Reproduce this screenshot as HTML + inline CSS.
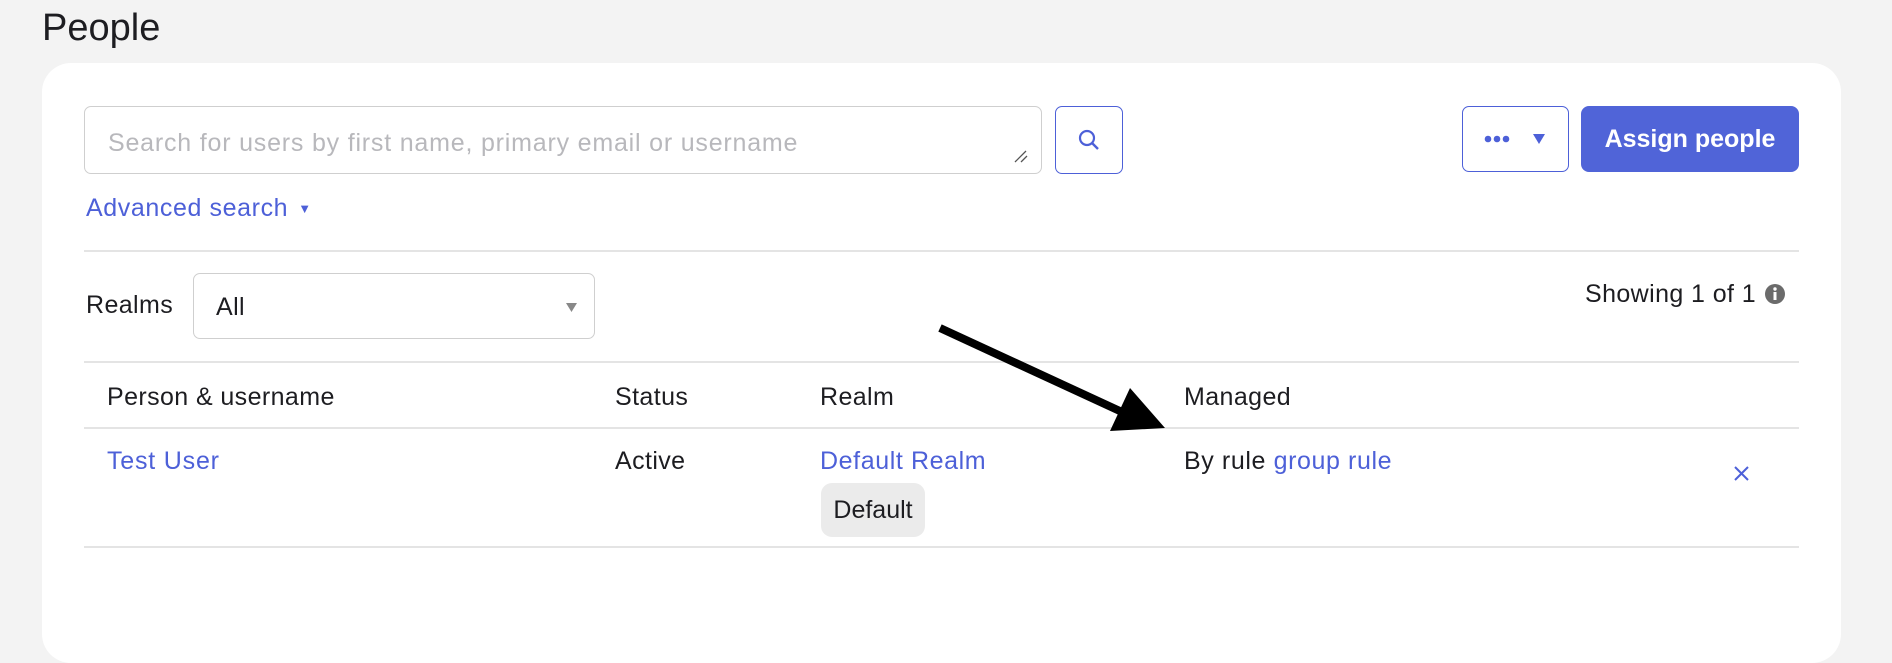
<!DOCTYPE html>
<html><head><meta charset="utf-8"><style>
*{box-sizing:border-box;margin:0;padding:0}
body{width:1892px;height:596px;background:#f3f3f3;font-family:"Liberation Sans",sans-serif;color:#1d1d21;position:relative;overflow:hidden}
.abs{position:absolute}
h1{position:absolute;left:42px;top:7px;font-size:38px;font-weight:normal;color:#1d1d21}
.card{position:absolute;left:42px;top:63px;width:1799px;height:600px;background:#fff;border-radius:29px}
.t{position:absolute;font-size:25px;line-height:28px;white-space:nowrap;letter-spacing:0.4px}
.link{color:#4d60d8}
.hr{position:absolute;left:84px;width:1715px;height:2px;background:#e4e4e4}
</style></head><body>
<h1>People</h1>
<div class="card"></div>
<div class="abs" style="left:84px;top:106px;width:958px;height:68px;border:1px solid #cfcfcf;border-radius:7px"></div>
<div class="t" style="left:108px;top:129px;color:#b8b8bc;letter-spacing:0.8px">Search for users by first name, primary email or username</div>
<svg class="abs" style="left:1012px;top:148px" width="18" height="16"><path d="M3 14L14 3M9 14L15 8" stroke="#555" stroke-width="1.3"/></svg>
<div class="abs" style="left:1055px;top:106px;width:68px;height:68px;border:1.5px solid #4d60d8;border-radius:7px"></div>
<svg class="abs" style="left:1077px;top:128px" width="24" height="24"><circle cx="10" cy="10" r="7" fill="none" stroke="#4d60d8" stroke-width="2.2"/><path d="M15 15L21 21" stroke="#4d60d8" stroke-width="2.4"/></svg>
<div class="t link" style="left:86px;top:194px;letter-spacing:0.6px">Advanced search<span style="font-size:13px;margin-left:10px;vertical-align:3px">▼</span></div>
<div class="abs" style="left:1462px;top:106px;width:107px;height:66px;border:1.5px solid #4d60d8;border-radius:7px"></div>
<svg class="abs" style="left:1484px;top:134px" width="28" height="10"><circle cx="4" cy="5" r="3.3" fill="#4d60d8"/><circle cx="13" cy="5" r="3.3" fill="#4d60d8"/><circle cx="22" cy="5" r="3.3" fill="#4d60d8"/></svg>
<svg class="abs" style="left:1533px;top:133px" width="12" height="12"><path d="M0 1H12L6 11Z" fill="#4d60d8"/></svg>
<div class="abs" style="left:1581px;top:106px;width:218px;height:66px;background:#5064d8;border-radius:8px;color:#fff;font-weight:bold;font-size:25px;line-height:66px;text-align:center">Assign people</div>
<div class="hr" style="top:250px"></div>
<div class="t" style="left:86px;top:291px">Realms</div>
<div class="abs" style="left:193px;top:273px;width:402px;height:66px;border:1px solid #cfcfcf;border-radius:7px"></div>
<div class="t" style="left:216px;top:293px">All</div>
<svg class="abs" style="left:566px;top:302px" width="11" height="11"><path d="M0 1H11L5.5 10Z" fill="#888"/></svg>
<div class="t" style="right:136px;top:280px">Showing 1 of 1</div>
<svg class="abs" style="left:1764px;top:283px" width="22" height="22"><circle cx="11" cy="11" r="10" fill="#6b6b6b"/><rect x="9.5" y="9" width="3" height="8" fill="#fff"/><circle cx="11" cy="6" r="1.7" fill="#fff"/></svg>
<div class="hr" style="top:361px"></div>
<div class="t" style="left:107px;top:383px">Person &amp; username</div>
<div class="t" style="left:615px;top:383px">Status</div>
<div class="t" style="left:820px;top:383px">Realm</div>
<div class="t" style="left:1184px;top:383px">Managed</div>
<div class="hr" style="top:427px"></div>
<div class="t link" style="left:107px;top:447px;letter-spacing:0.8px">Test User</div>
<div class="t" style="left:615px;top:447px">Active</div>
<div class="t link" style="left:820px;top:447px;letter-spacing:0.6px">Default Realm</div>
<div class="abs" style="left:821px;top:483px;width:104px;height:54px;background:#ebebeb;border-radius:11px;font-size:25px;line-height:54px;text-align:center">Default</div>
<div class="t" style="left:1184px;top:447px;letter-spacing:0.6px">By rule <span class="link">group rule</span></div>
<svg class="abs" style="left:1733px;top:465px" width="17" height="17"><path d="M2 2L15 15M15 2L2 15" stroke="#4d60d8" stroke-width="2"/></svg>
<div class="hr" style="top:546px"></div>
<svg class="abs" style="left:0;top:0" width="1892" height="596"><path d="M940 328L1122 412" stroke="#000" stroke-width="8"/><path d="M1165 428L1130 388L1110 431Z" fill="#000"/></svg>
</body></html>
